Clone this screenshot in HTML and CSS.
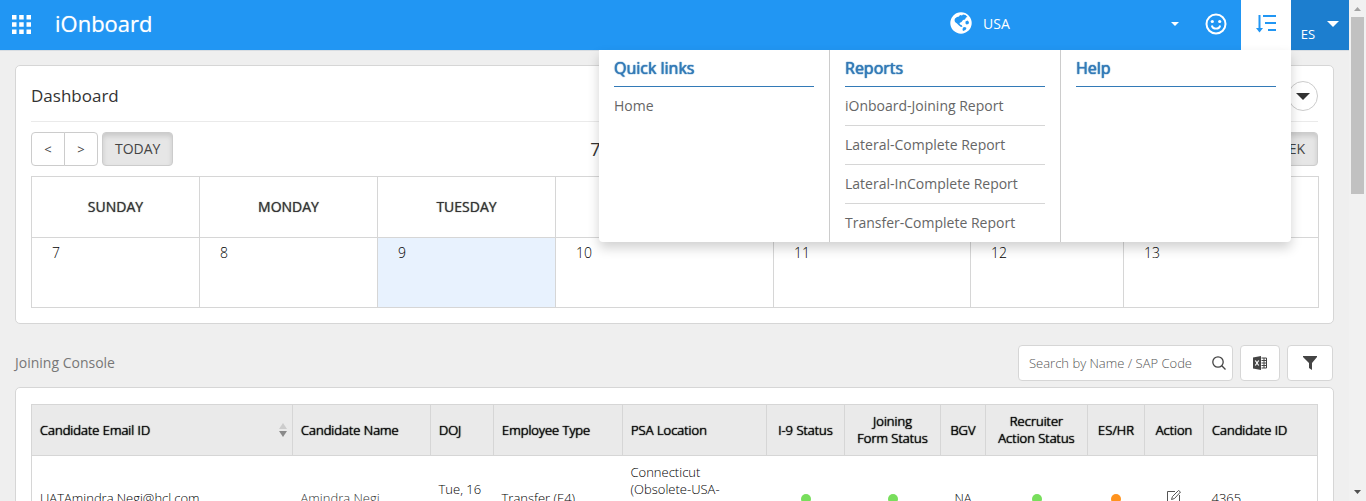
FILE: index.html
```html
<!DOCTYPE html>
<html lang="en">
<head>
<meta charset="utf-8">
<title>iOnboard</title>
<link rel="stylesheet" href="styles.css">
</head>
<body>
<div class="page">
  <header class="topbar">
    <button class="apps" aria-label="Applications">
      <svg width="20" height="20" viewBox="0 0 20 20" fill="#fff"><path d="M0 0h4.500v4.500H0zM7.200 0h4.500v4.500H7.200zM14.500 0H19v4.500h-4.500zM0 7.200h4.500v4.500H0zM7.200 7.200h4.500v4.500H7.200zM14.500 7.200H19v4.500h-4.500zM0 14.500h4.500V19H0zM7.200 14.500h4.500V19H7.200zM14.500 14.500H19V19h-4.500z"/></svg>
    </button>
    <h1 class="brand">iOnboard</h1>
    <label class="country">
      <svg width="22" height="22" viewBox="0 0 22 22"><circle cx="11" cy="11" r="10.700" fill="#fff"/><path fill="#2196f3" d="M5 6.500L7 5l2-.5L10 3l2 .5 1-1 2.500.5 2 2-1.500.5-1 2-2 .5-1.500 2-2 1 .5 1.500 1.500.5 1 1.500-1.500.5-2-1.500L7 11.500 5 10 4.500 8zM15.500 9.500l2-1 1.500 1.500-.5 2-2 .5-1-1zM13 15.500l2-.5 1.500 1-1 2-2.500 1-.5-1.500z"/></svg>
      <select class="country-select" aria-label="Country"><option>USA</option></select>
      <svg class="country-caret" width="8" height="4" viewBox="0 0 8 4"><path d="M0 0h8L4 4z" fill="#fff"/></svg>
    </label>
    <button class="smile" aria-label="Feedback">
      <svg width="22" height="22" viewBox="0 0 22 22" fill="none" stroke="#fff" stroke-width="2"><circle cx="11" cy="11" r="9.500"/><circle cx="7.300" cy="8.500" r="1.600" fill="#fff" stroke="none"/><circle cx="14.700" cy="8.500" r="1.600" fill="#fff" stroke="none"/><path d="M6.800 12.500c.8 4.200 7.600 4.200 8.400 0" stroke-width="1.800"/></svg>
    </button>
    <button class="menu-toggle" aria-label="Links menu" aria-expanded="true">
      <svg width="20" height="20" viewBox="0 0 20 20" fill="none" stroke="#2196f3" stroke-width="2"><path d="M3.500 1v14M7 2h13M9 9h11M12 16h8"/><path d="M0 14h7l-3.500 4.500z" fill="#2196f3" stroke="none"/></svg>
    </button>
    <button class="user"><span>ES</span>
      <svg width="12" height="6" viewBox="0 0 12 6"><path d="M0 0h12L6 6z" fill="#fff"/></svg>
    </button>
    <nav class="mega">
      <section class="mega-col"><h2>Quick links</h2><ul><li><a href="#home">Home</a></li></ul></section>
      <section class="mega-col"><h2>Reports</h2>
        <ul>
          <li><a href="#joining">iOnboard-Joining Report</a></li>
          <li><a href="#lateral">Lateral-Complete Report</a></li>
          <li><a href="#incomplete">Lateral-InComplete Report</a></li>
          <li><a href="#transfer">Transfer-Complete Report</a></li>
        </ul>
      </section>
      <section class="mega-col"><h2>Help</h2></section>
    </nav>
  </header>

  <main class="content">
    <section class="card">
      <div class="card-head">
        <h2>Dashboard</h2>
        <button class="round" aria-label="Collapse"><svg width="14" height="7" viewBox="0 0 14 7"><path d="M0 0h14L7 7z" fill="#333"/></svg></button>
      </div>
      <div class="cal-bar">
        <div class="cal-left">
          <div class="pair"><button class="btn">&lt;</button><button class="btn">&gt;</button></div>
          <button class="btn active">TODAY</button>
        </div>
        <h3>7 Apr – 13 Apr, 2024</h3>
        <div class="cal-right"><button class="btn active">WEEK</button></div>
      </div>
      <table class="cal">
        <colgroup><col class="d1"><col class="d2"><col class="d2"><col class="d4"><col class="d5"><col class="d6"><col class="d7"></colgroup>
        <thead><tr><th>SUNDAY</th><th>MONDAY</th><th>TUESDAY</th><th>WEDNESDAY</th><th>THURSDAY</th><th>FRIDAY</th><th>SATURDAY</th></tr></thead>
        <tbody><tr><td>7</td><td>8</td><td class="today">9</td><td>10</td><td>11</td><td>12</td><td>13</td></tr></tbody>
      </table>
    </section>

    <div class="console-bar">
      <h2>Joining Console</h2>
      <div class="search">
        <input type="text" placeholder="Search by Name / SAP Code" aria-label="Search by Name / SAP Code">
        <button aria-label="Search"><svg width="14" height="14" viewBox="0 0 14 14" fill="none" stroke="#444" stroke-width="1.300"><circle cx="6" cy="6" r="5.200"/><path d="M9.800 9.800L13.500 13.500"/></svg></button>
      </div>
      <button class="tool excel" aria-label="Export to Excel">
        <svg width="14" height="14" viewBox="0 0 14 14"><path d="M0 1.500L8 0v14L0 12.500z" fill="#444"/><path d="M2.300 4.500l3.400 5M5.700 4.500l-3.400 5" stroke="#fff" stroke-width="1.200"/><path d="M8.500 2H13.500v10H8.500M8.500 4.500h5M8.500 7h5M8.500 9.500h5M11 2v10" fill="none" stroke="#444"/></svg>
      </button>
      <button class="tool filter" aria-label="Filter">
        <svg width="14" height="14" viewBox="0 0 14 14"><path d="M0 0h14v1L9 7v7l-3-2V7L0 1z" fill="#444"/></svg>
      </button>
    </div>

    <section class="card">
      <table class="list">
        <colgroup><col><col class="c-name"><col class="c-doj"><col class="c-type"><col class="c-psa"><col class="c-i9"><col class="c-form"><col class="c-bgv"><col class="c-rec"><col class="c-es"><col class="c-act"><col class="c-id"></colgroup>
        <thead><tr>
          <th><span class="sortable">Candidate Email ID<svg width="8" height="14" viewBox="0 0 8 14"><path d="M0 6h8L4 0z" fill="#ccc"/><path d="M0 8h8L4 14z" fill="#8a8a8a"/></svg></span></th>
          <th>Candidate Name</th><th>DOJ</th><th>Employee Type</th><th>PSA Location</th>
          <th class="mid">I-9 Status</th><th class="mid">Joining<br>Form Status</th><th class="mid">BGV</th><th class="mid">Recruiter<br>Action Status</th><th class="mid">ES/HR</th><th class="mid">Action</th><th>Candidate ID</th>
        </tr></thead>
        <tbody><tr>
          <td>UATAmindra.Negi@hcl.com</td><td class="soft">Amindra Negi</td><td>Tue, 16 Apr 24</td><td>Transfer (E4)</td><td>Connecticut<br>(Obsolete-USA-<br>Connecticut<br>Region)</td>
          <td class="mid"><span class="dot"></span></td><td class="mid"><span class="dot"></span></td><td class="mid">NA</td><td class="mid"><span class="dot"></span></td><td class="mid"><span class="dot orange"></span></td>
          <td class="mid"><button class="edit" aria-label="Edit"><svg width="16" height="16" viewBox="0 0 16 16" fill="none" stroke="#555"><path d="M9 1.500H1.500v13h12V5"/><path d="M5.500 9.500l1-3L12.500.500l2 1.500L8.500 8.500z"/></svg></button></td><td>4365</td>
        </tr></tbody>
      </table>
    </section>
  </main>
</div>
<div class="scroll" aria-hidden="true">
  <svg width="7" height="4" viewBox="0 0 7 4"><path d="M0 4h7L3.500 0z" fill="#a3a3a3"/></svg>
  <div class="thumb"></div>
  <svg width="7" height="4" viewBox="0 0 7 4"><path d="M0 0h7L3.500 4z" fill="#505050"/></svg>
</div>
</body>
</html>
```
FILE: styles.css
```css
* { box-sizing: border-box; }
body {
  margin: 0;
  height: 100vh;
  display: flex;
  overflow: hidden;
  background: #efefef;
  color: #333;
  font: 14px/20px "Open Sans", "Noto Sans", sans-serif;
}
h1, h2, h3, ul { margin: 0; padding: 0; font-weight: 400; list-style: none; }
button, input, select { font: inherit; color: inherit; margin: 0; padding: 0; border: 0; background: none; }
button { display: flex; align-items: center; justify-content: center; }
svg { display: block; flex: none; }
a { color: inherit; text-decoration: none; }
.page { flex: 1; min-width: 0; overflow: hidden; }

.topbar {
  position: relative;
  height: 50px;
  display: flex;
  align-items: stretch;
  background: #2196f3;
  color: #fff;
  box-shadow: 0 1px 0 #d8dde2;
}
.apps { width: 32px; padding-left: 12px; }
.brand { margin-left: 23px; flex: 1; font-size: 22px; line-height: 46px; text-shadow: 0 0 1px rgba(255, 255, 255, .6); }
.country { position: relative; display: flex; align-items: center; gap: 11px; height: 46px; margin-right: 11px; }
.country-select { width: 197px; height: 48px; appearance: none; margin-top: 2px; }
.country-select option { color: #333; }
.country-caret { position: absolute; right: 1px; top: 22px; }
.smile { width: 50px; height: 48px; }
.menu-toggle { width: 50px; background: #fff; padding-bottom: 2px; }
.user { width: 58px; background: #1c7ecf; gap: 12px; align-items: flex-start; padding-top: 21px; }
.user span { margin-top: 3px; font-size: 13px; }

.mega {
  position: absolute;
  z-index: 5;
  top: 50px;
  right: 58px;
  display: flex;
  background: #fff;
  color: #666;
  border-radius: 0 0 4px 4px;
  box-shadow: 0 6px 12px rgba(0, 0, 0, .18);
}
.mega-col { width: 231px; height: 192px; padding: 0 15px; border-right: 1px solid #ccc; }
.mega-col:last-child { width: 230px; border-right: 0; }
.mega h2 {
  height: 37px;
  font-size: 16px;
  line-height: 36px;
  color: #337ab7;
  border-bottom: 1px solid #337ab7;
  text-shadow: 0 0 1px #337ab7, 0 0 1px #337ab7;
}
.mega li { height: 39px; line-height: 38px; border-bottom: 1px solid #d6d6d6; }
.mega li:last-child { border-bottom: 0; }

.content { padding: 15px; }
.card { background: #fff; border: 1px solid #d6d6d6; border-radius: 5px; padding: 15px; }
.card-head { display: flex; justify-content: space-between; align-items: center; height: 41px; border-bottom: 1px solid #eaeaea; padding-bottom: 10px; }
.card-head h2 { font-size: 17px; }
.round { width: 30px; height: 30px; border: 1px solid #ccc; border-radius: 50%; }
.cal-bar { display: grid; grid-template-columns: 1fr auto 1fr; align-items: center; padding: 10px 0; }
.cal-left { display: flex; gap: 4px; }
.cal-right { display: flex; justify-content: flex-end; }
.cal-bar h3 { font-size: 18px; }
.pair { display: flex; }
.btn { height: 34px; padding: 0 12px; border: 1px solid #ccc; border-radius: 4px; background: #fff; color: #444; }
.pair .btn { width: 34px; font-size: 13px; padding: 0; }
.pair .btn:first-child { border-radius: 4px 0 0 4px; }
.pair .btn:last-child { border-radius: 0 4px 4px 0; margin-left: -1px; }
.btn.active { background: #e6e6e6; box-shadow: inset 0 3px 5px rgba(0, 0, 0, .125); }

table { width: 100%; table-layout: fixed; border-collapse: collapse; }
.cal th { height: 61px; padding: 0; border: 1px solid #d6d6d6; font-weight: 400; text-shadow: 0 0 1px #555; }
.cal td { height: 70px; padding: 5px 20px; border: 1px solid #d6d6d6; vertical-align: top; font-weight: 300; color: #000; }
.cal .today { background: #e8f2fe; }
.d1 { width: 168px; }
.d2 { width: 178px; }
.d4 { width: 218px; }
.d5 { width: 197px; }
.d6 { width: 153px; }
.d7 { width: 195px; }

.console-bar { display: flex; align-items: center; gap: 7px; padding: 21px 1px 6px 0; }
.console-bar h2 { flex: 1; font-size: 14px; color: #777; }
.search { display: flex; align-items: center; width: 215px; height: 36px; padding: 0 6px 0 10px; background: #fff; border: 1px solid #d6d6d6; border-radius: 4px; }
.search input { flex: 1; min-width: 0; font-size: 13px; font-weight: 300; outline: 0; }
.search input::placeholder { color: #555; opacity: 1; }
.tool { height: 36px; background: #fff; border: 1px solid #d6d6d6; border-radius: 4px; }
.excel { width: 40px; }
.filter { width: 46px; }

.list { font-size: 13px; line-height: 17px; font-weight: 300; color: #000; margin-top: 1px; }
.list th { height: 51px; padding: 0 8px; background: #eaeaea; border: 1px solid #d6d6d6; text-align: left; font-weight: 300; text-shadow: 0 0 1px #000, 0 0 1px #000; }
.list th.mid { padding: 0; }
.list td { height: 84px; padding: 8px; border-bottom: 1px solid #d6d6d6; }
.list tbody tr { border: 1px solid #d6d6d6; }
.list .mid { text-align: center; }
.list .soft { color: #333; }
.sortable { display: flex; align-items: center; justify-content: space-between; margin-right: -3px; }
.dot { display: inline-block; width: 10px; height: 10px; border-radius: 50%; background: #78de5c; vertical-align: middle; }
.dot.orange { background: #ff931e; }
.edit { margin: 0 auto; }
.c-name { width: 138px; }
.c-doj { width: 63px; }
.c-type { width: 129px; }
.c-psa { width: 144px; }
.c-i9 { width: 78px; }
.c-form { width: 96px; }
.c-bgv { width: 45px; }
.c-rec { width: 102px; }
.c-es { width: 57px; }
.c-act { width: 59px; }
.c-id { width: 114px; }

.scroll { width: 17px; display: flex; flex-direction: column; align-items: center; padding: 7px 0; background: #f1f1f1; }
.thumb { width: 13px; height: 177px; margin: 6px 0 auto; background: #c1c1c1; }
```
